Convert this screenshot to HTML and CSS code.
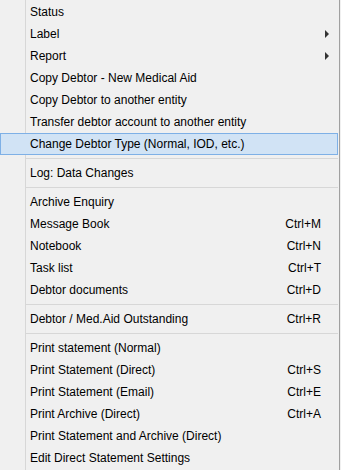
FILE: index.html
```html
<!DOCTYPE html>
<html>
<head>
<meta charset="utf-8">
<link rel="stylesheet" href="styles.css">
</head>
<body>
<div class="menu">
  <div class="item"><span class="label">Status</span></div>
  <div class="item"><span class="label">Label</span><span class="arrow"></span></div>
  <div class="item"><span class="label">Report</span><span class="arrow"></span></div>
  <div class="item"><span class="label">Copy Debtor - New Medical Aid</span></div>
  <div class="item"><span class="label">Copy Debtor to another entity</span></div>
  <div class="item"><span class="label">Transfer debtor account to another entity</span></div>
  <div class="item active"><span class="label">Change Debtor Type (Normal, IOD, etc.)</span></div>
  <div class="sep"></div>
  <div class="item"><span class="label">Log: Data Changes</span></div>
  <div class="sep"></div>
  <div class="item"><span class="label">Archive Enquiry</span></div>
  <div class="item"><span class="label">Message Book</span><span class="key">Ctrl+M</span></div>
  <div class="item"><span class="label">Notebook</span><span class="key">Ctrl+N</span></div>
  <div class="item"><span class="label">Task list</span><span class="key">Ctrl+T</span></div>
  <div class="item"><span class="label">Debtor documents</span><span class="key">Ctrl+D</span></div>
  <div class="sep"></div>
  <div class="item"><span class="label">Debtor / Med.Aid Outstanding</span><span class="key">Ctrl+R</span></div>
  <div class="sep"></div>
  <div class="item"><span class="label">Print statement (Normal)</span></div>
  <div class="item"><span class="label">Print Statement (Direct)</span><span class="key">Ctrl+S</span></div>
  <div class="item"><span class="label">Print Statement (Email)</span><span class="key">Ctrl+E</span></div>
  <div class="item"><span class="label">Print Archive (Direct)</span><span class="key">Ctrl+A</span></div>
  <div class="item"><span class="label">Print Statement and Archive (Direct)</span></div>
  <div class="item"><span class="label">Edit Direct Statement Settings</span></div>
</div>
</body>
</html>
```

FILE: styles.css
```css
html, body {
  margin: 0;
  padding: 0;
  background: #f0f0f0;
  overflow: hidden;
}

.menu {
  width: 340px;
  height: 470px;
  box-sizing: border-box;
  padding: 1px 1px 0 0;
  border-right: 1px solid #a0a0a0;
  background:
    linear-gradient(to right, transparent 25px, #d7d7d7 25px, #d7d7d7 26px, transparent 26px),
    #f0f0f0;
  font-family: "Liberation Sans", Arial, sans-serif;
  font-size: 12px;
  color: #000;
}

.item {
  display: flex;
  align-items: center;
  height: 22px;
  box-sizing: border-box;
  padding-left: 30px;
  padding-right: 17px;
  line-height: 22px;
  white-space: nowrap;
}

.item .label {
  flex: 1;
}

.item.active {
  background: #d1e3f5;
  border: 1px solid #7eb0e6;
  padding-left: 29px;
  padding-right: 16px;
}

.key {
  text-align: right;
}

.arrow {
  width: 0;
  height: 0;
  border-top: 4px solid transparent;
  border-bottom: 4px solid transparent;
  border-left: 4px solid #333;
  margin-right: -8px;
}

.sep {
  height: 7px;
  margin-left: 25px;
  background: linear-gradient(to bottom, transparent 3px, #d7d7d7 3px, #d7d7d7 4px, transparent 4px);
}
```
